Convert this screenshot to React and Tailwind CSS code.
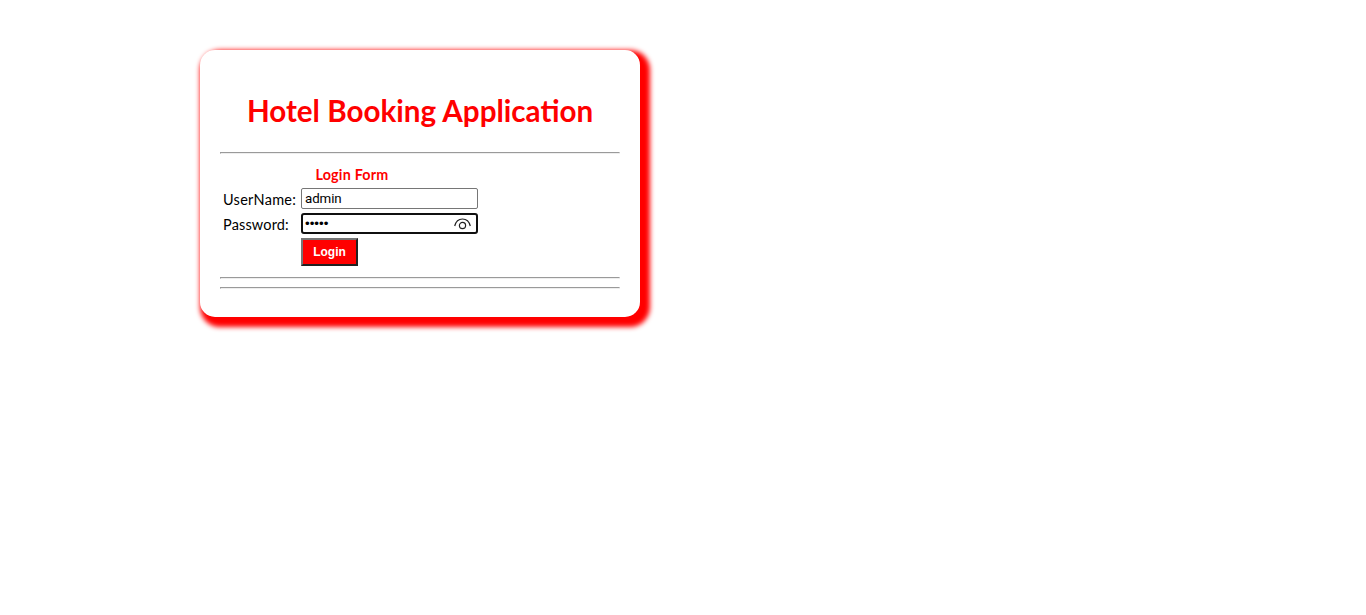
import React from 'react';

function Rule() {
  return <div className="h-[2px] w-full border border-t-[#9a9a9a] border-r-[#eeeeee] border-b-[#eeeeee] border-l-[#9a9a9a]" />;
}

function EyeIcon() {
  return (
    <svg className="h-[12px] w-[17px] shrink-0" viewBox="0 0 17 12" fill="none" stroke="#222" strokeWidth="1.2">
      <path d="M.7 8C1.8 3.5 4.8 1 8.5 1S15.2 3.5 16.3 8" />
      <circle cx="8.5" cy="7.5" r="3.1" />
    </svg>
  );
}

export default function App() {
  return (
    <main className="min-h-[615px] bg-white pt-[50px] pl-[200px] font-['Lato',sans-serif] text-black">
      <section className="flex h-[267px] w-[440px] flex-col rounded-[15px] bg-white px-5 shadow-[5px_5px_5px_5px_red]">
        <h1 className="mt-[41px] h-[39px] text-center text-[29.6px] leading-[39px] font-bold whitespace-nowrap text-[red]">
          Hotel Booking Application
        </h1>
        <div className="mt-[22px]"><Rule /></div>
        <form className="mt-[11px] w-[261px] pl-[3px]" onSubmit={(e) => e.preventDefault()}>
          <h2 className="h-[19px] text-center text-[14.3px] leading-[20px] font-bold tracking-[0.22px] text-[red]">Login Form</h2>
          <div className="mt-[4px] flex h-[21px] items-center">
            <label className="w-[78px] shrink-0 pt-[2px] text-[14.5px] leading-[21px] tracking-[0.28px] whitespace-nowrap">UserName:</label>
            <div className="flex h-[21px] w-[177px] items-center rounded-[2px] border border-[#767676] px-[3px] font-['Roboto',sans-serif] text-[13.33px] leading-[19px] tracking-[-0.1px]">admin</div>
          </div>
          <div className="mt-[4px] flex h-[21px] items-center">
            <label className="w-[78px] shrink-0 pt-[2px] text-[14.5px] leading-[21px] tracking-[0.15px] whitespace-nowrap">Password:</label>
            <div className="flex h-[21px] w-[177px] items-center justify-between rounded-[3px] border-2 border-[#101010] pr-[5px] pl-[2px] font-['Liberation_Sans',sans-serif] text-[13.33px] leading-[17px]">
              <span>•••••</span>
              <EyeIcon />
            </div>
          </div>
          <button className="mt-[4px] ml-[78px] block h-[28px] w-[57px] border-2 border-t-[#767676] border-r-[#212121] border-b-[#212121] border-l-[#767676] bg-[red] text-center font-['Liberation_Sans',sans-serif] text-[12px] leading-[24px] font-bold text-white">
            Login
          </button>
        </form>
        <div className="mt-[11px] flex flex-col gap-[8px]">
          <Rule />
          <Rule />
        </div>
      </section>
    </main>
  );
}
